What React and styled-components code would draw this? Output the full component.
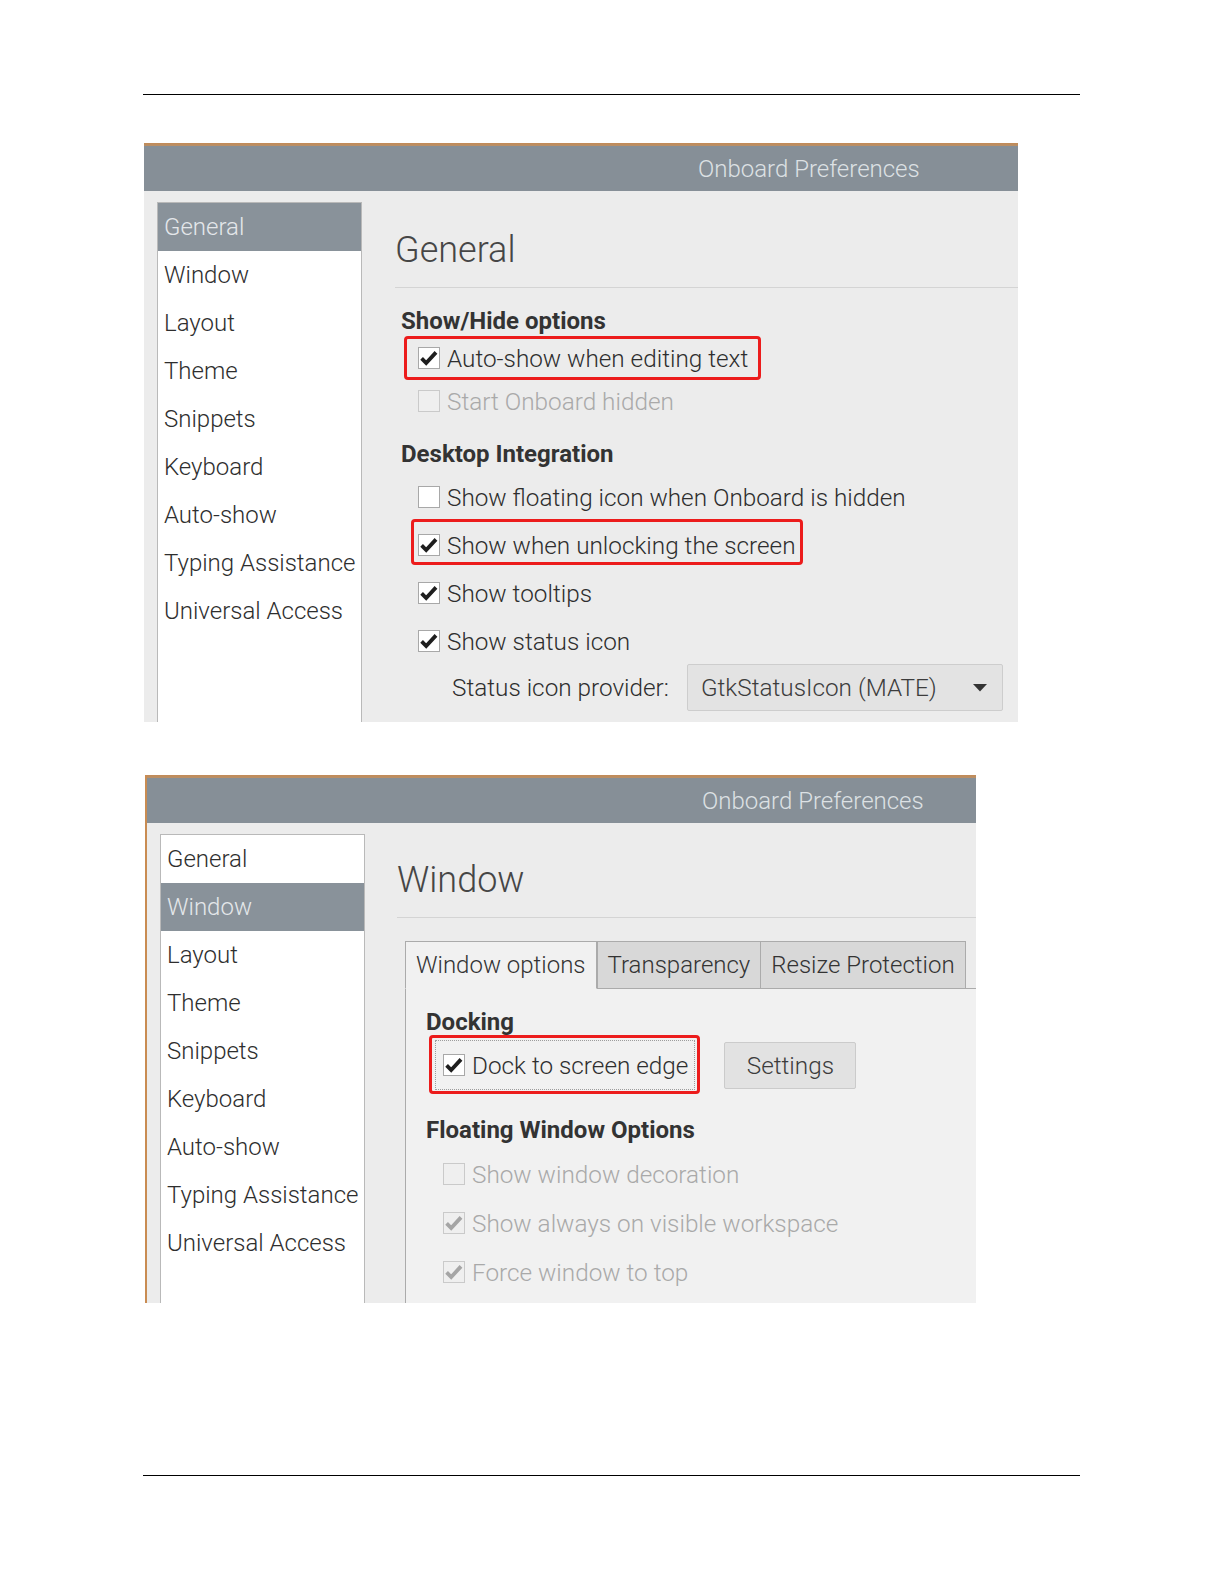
import React from 'react';
import styled, { createGlobalStyle } from 'styled-components';

const GlobalStyle = createGlobalStyle`
  html, body { margin: 0; padding: 0; background: #fff; }
  body { font-family: Roboto, "Liberation Sans", sans-serif; color: #3c3c3c; }
  * { box-sizing: border-box; }
`;

const Page = styled.div`
  width: 1224px;
  height: 1584px;
  padding-top: 94px;
  display: flex;
  flex-direction: column;
`;

const Rule = styled.hr`
  margin: ${p => p.$top || 0}px 0 0 143px;
  width: 937px;
  height: 0;
  border: none;
  border-top: 1px solid #000;
  flex: none;
`;

const Window = styled.section`
  margin: ${p => p.$top}px 0 0 ${p => p.$left}px;
  width: ${p => p.$width}px;
  height: ${p => p.$height}px;
  flex: none;
  background: #ececec;
  border-left: ${p => (p.$edge ? '2px solid #c98c52' : 'none')};
  display: flex;
  flex-direction: column;
  overflow: hidden;
`;

const TitleBar = styled.header`
  height: 48px;
  flex: none;
  background: linear-gradient(to bottom, #c38a55 0, #b7906a 3px, #868f97 3px);
  display: flex;
  align-items: center;
  padding: 4px 0 0 ${p => p.$titleX}px;
  font-size: 24px;
  font-weight: 300;
  color: #dde1e4;
  white-space: nowrap;
`;

const Body = styled.div`
  flex: 1;
  display: flex;
  min-height: 0;
`;

const Sidebar = styled.nav`
  margin: ${p => p.$top}px 0 0 13px;
  width: 205px;
  flex: none;
  background: #fff;
  border: 1px solid #b9b9b9;
  border-bottom: none;
  display: flex;
  flex-direction: column;
`;

const SideItem = styled.div`
  height: 48px;
  flex: none;
  display: flex;
  align-items: center;
  padding-left: 6px;
  font-size: 24px;
  font-weight: 300;
  white-space: nowrap;
  color: ${p => (p.$active ? '#e4e7ea' : '#2e2e2e')};
  background: ${p => (p.$active ? '#89929a' : 'transparent')};
`;

const Main = styled.div`
  flex: 1;
  min-width: 0;
  margin-left: ${p => p.$gap}px;
  display: flex;
  flex-direction: column;
`;

const Heading = styled.h1`
  margin: ${p => p.$top}px 0 0;
  font-size: 36px;
  line-height: 44px;
  font-weight: 300;
  color: #464646;
`;

const Divider = styled.div`
  margin-top: 15px;
  height: 1px;
  flex: none;
  background: #d4d4d4;
`;

const Content = styled.div`
  padding-left: ${p => p.$indent}px;
  display: flex;
  flex-direction: column;
`;

const SectionTitle = styled.h2`
  margin: ${p => p.$top}px 0 0;
  font-size: 24px;
  line-height: 30px;
  font-weight: 700;
  color: #333;
  white-space: nowrap;
`;

const OptionList = styled.div`
  margin-top: ${p => p.$top}px;
  padding-left: 17px;
  display: flex;
  flex-direction: column;
  align-items: flex-start;
  gap: ${p => p.$gap}px;
`;

const Option = styled.div`
  position: relative;
  height: 30px;
  display: flex;
  align-items: center;
  gap: 7px;
  font-size: 24.3px;
  font-weight: 300;
  white-space: nowrap;
  color: ${p => (p.$disabled ? '#a9a9a9' : '#2e2e2e')};

  &::after {
    content: ${p => (p.$mark ? '""' : 'none')};
    position: absolute;
    inset: ${p => p.$mark || 0};
    border: 3px solid #ec1c1c;
    border-radius: 4px;
    pointer-events: none;
  }
`;

const Box = styled.span`
  width: 22px;
  height: 22px;
  flex: none;
  display: flex;
  align-items: center;
  justify-content: center;
  border: 1px solid ${p => (p.$disabled ? '#cacaca' : '#a8a8a8')};
  background: ${p => (p.$disabled ? '#efefef' : '#fff')};
`;

const Check = ({ checked, disabled }) => (
  <Box $disabled={disabled}>
    {checked && (
      <svg width="20" height="20" viewBox="0 0 20 20">
        <path
          d="M2.6 10.4 L7.2 15 L17 4.4"
          fill="none"
          stroke={disabled ? '#a5a5a5' : '#1e1e1e'}
          strokeWidth="3.8"
        />
      </svg>
    )}
  </Box>
);

const CheckOption = ({ label, checked, disabled, mark }) => (
  <Option $disabled={disabled} $mark={mark}>
    <Check checked={checked} disabled={disabled} />
    {label}
  </Option>
);

const ProviderRow = styled.div`
  margin-top: ${p => p.$top}px;
  padding-left: 51px;
  display: flex;
  align-items: center;
  gap: 18px;
  font-size: 24.3px;
  font-weight: 300;
  color: #2e2e2e;
  white-space: nowrap;
`;

const Select = styled.div`
  width: 316px;
  height: 47px;
  padding: 0 15px 0 13px;
  display: flex;
  align-items: center;
  justify-content: space-between;
  background: #e3e3e3;
  border: 1px solid #cdcdcd;
  border-radius: 2px;
  color: #3c3c3c;
`;

const Caret = () => (
  <svg width="14" height="8" viewBox="0 0 14 8">
    <path d="M0 0 H14 L7 7.5 Z" fill="#333" />
  </svg>
);

const Notebook = styled.div`
  margin: 23px 0 0 8px;
  flex: 1;
  display: flex;
  flex-direction: column;
`;

const TabStrip = styled.div`
  height: 48px;
  flex: none;
  display: flex;
`;

const Tab = styled.div`
  padding: 0 ${p => p.$pad}px;
  display: flex;
  align-items: center;
  font-size: 24px;
  font-weight: 300;
  white-space: nowrap;
  border: 1px solid #ababab;
  border-left-width: ${p => (p.$joined ? 0 : 1)}px;
  border-bottom-color: ${p => (p.$active ? '#f1f1f1' : '#ababab')};
  background: ${p => (p.$active ? '#f1f1f1' : '#d8d8d8')};
  color: #333;
`;

const TabFill = styled.div`
  flex: 1;
  border-bottom: 1px solid #ababab;
`;

const TabPanel = styled.div`
  flex: 1;
  background: #f1f1f1;
  border-left: 1px solid #ababab;
  padding-left: 20px;
  display: flex;
  flex-direction: column;
`;

const DockRow = styled.div`
  margin-top: 3px;
  padding-left: 9px;
  display: flex;
  align-items: center;
`;

const FocusCheck = styled.div`
  position: relative;
  padding: 9px 6px 9px 7px;
  border: 1px dotted #9c9c9c;

  &::after {
    content: "";
    position: absolute;
    inset: -6px -6px -5px -7px;
    border: 3px solid #ec1c1c;
    border-radius: 4px;
  }
`;

const Button = styled.div`
  margin-left: 29px;
  width: 132px;
  height: 47px;
  display: flex;
  align-items: center;
  justify-content: center;
  font-size: 24.3px;
  font-weight: 300;
  color: #3c3c3c;
  background: #e2e2e2;
  border: 1px solid #cbcbcb;
  border-radius: 2px;
`;

const pages = ['General', 'Window', 'Layout', 'Theme', 'Snippets', 'Keyboard', 'Auto-show', 'Typing Assistance', 'Universal Access'];

const SideList = ({ active, top }) => (
  <Sidebar $top={top}>
    {pages.map(p => (
      <SideItem key={p} $active={p === active}>{p}</SideItem>
    ))}
  </Sidebar>
);

const GeneralWindow = () => (
  <Window $top={48} $left={144} $width={874} $height={579}>
    <TitleBar $titleX={554}>Onboard Preferences</TitleBar>
    <Body>
      <SideList active="General" top={11} />
      <Main $gap={33}>
        <Heading $top={37}>General</Heading>
        <Divider />
        <Content $indent={6}>
          <SectionTitle $top={18}>Show/Hide options</SectionTitle>
          <OptionList $top={7} $gap={13}>
            <CheckOption label="Auto-show when editing text" checked mark="-7px -13px -7px -14px" />
            <CheckOption label="Start Onboard hidden" disabled />
          </OptionList>
          <SectionTitle $top={23}>Desktop Integration</SectionTitle>
          <OptionList $top={13} $gap={18}>
            <CheckOption label="Show floating icon when Onboard is hidden" />
            <CheckOption label="Show when unlocking the screen" checked mark="-11px -7px -5px -7px" />
            <CheckOption label="Show tooltips" checked />
            <CheckOption label="Show status icon" checked />
          </OptionList>
          <ProviderRow $top={8}>
            Status icon provider:
            <Select>
              GtkStatusIcon (MATE)
              <Caret />
            </Select>
          </ProviderRow>
        </Content>
      </Main>
    </Body>
  </Window>
);

const WindowPrefs = () => (
  <Window $top={53} $left={145} $width={831} $height={528} $edge>
    <TitleBar $titleX={555}>Onboard Preferences</TitleBar>
    <Body>
      <SideList active="Window" top={11} />
      <Main $gap={32}>
        <Heading $top={35}>Window</Heading>
        <Divider />
        <Notebook>
          <TabStrip>
            <Tab $active $pad={10}>Window options</Tab>
            <Tab $pad={10}>Transparency</Tab>
            <Tab $pad={10} $joined>Resize Protection</Tab>
            <TabFill />
          </TabStrip>
          <TabPanel>
            <SectionTitle $top={18}>Docking</SectionTitle>
            <DockRow>
              <FocusCheck>
                <CheckOption label="Dock to screen edge" checked />
              </FocusCheck>
              <Button>Settings</Button>
            </DockRow>
            <SectionTitle $top={25}>Floating Window Options</SectionTitle>
            <OptionList $top={14} $gap={19}>
              <CheckOption label="Show window decoration" disabled />
              <CheckOption label="Show always on visible workspace" checked disabled />
              <CheckOption label="Force window to top" checked disabled />
            </OptionList>
          </TabPanel>
        </Notebook>
      </Main>
    </Body>
  </Window>
);

export default function App() {
  return (
    <Page>
      <GlobalStyle />
      <Rule />
      <GeneralWindow />
      <WindowPrefs />
      <Rule $top={172} />
    </Page>
  );
}
